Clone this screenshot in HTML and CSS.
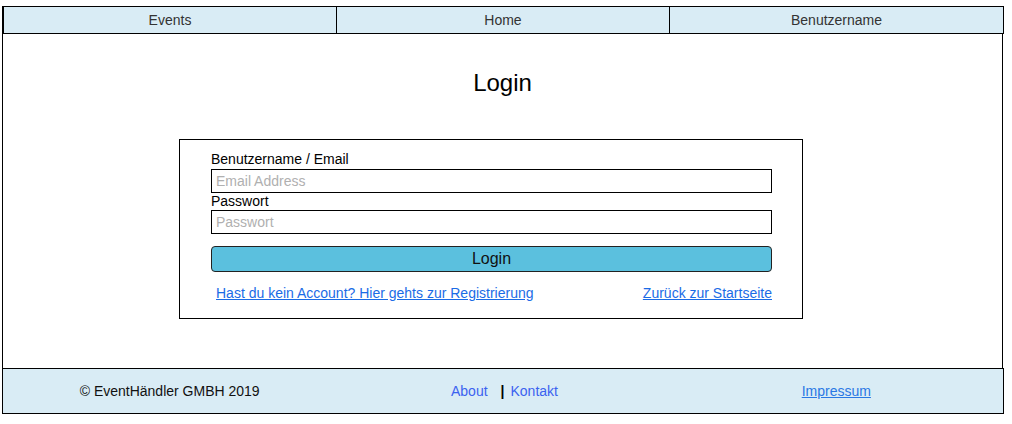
FILE: index.html
```html
<!DOCTYPE html>
<html lang="de">
<head>
<meta charset="utf-8">
<title>Login</title>
<link rel="stylesheet" href="styles.css">
</head>
<body>
<div class="page">
  <nav class="topnav">
    <a class="nav-item" href="#">Events</a>
    <a class="nav-item" href="#">Home</a>
    <a class="nav-item" href="#">Benutzername</a>
  </nav>
  <main class="main">
    <h1 class="title">Login</h1>
    <form class="login-box">
      <label class="field-label" for="email">Benutzername / Email</label>
      <input class="field-input" id="email" type="text" placeholder="Email Address">
      <label class="field-label tight" for="pw">Passwort</label>
      <input class="field-input" id="pw" type="password" placeholder="Passwort">
      <button class="login-btn" type="button">Login</button>
      <div class="link-row">
        <a class="form-link" href="#">Hast du kein Account? Hier gehts zur Registrierung</a>
        <a class="form-link" href="#">Zurück zur Startseite</a>
      </div>
    </form>
  </main>
  <footer class="footer">
    <div class="foot-col">© EventHändler GMBH 2019</div>
    <div class="foot-col shift">
      <a class="foot-link" href="#">About</a>
      <span class="sep">|</span>
      <a class="foot-link" href="#">Kontakt</a>
    </div>
    <div class="foot-col"><a class="foot-link underline" href="#">Impressum</a></div>
  </footer>
</div>
</body>
</html>
```
FILE: styles.css
```css
* { box-sizing: border-box; }
html, body { margin: 0; padding: 0; background: #fff; }
body {
  font-family: "Liberation Sans", Arial, sans-serif;
  font-size: 14px;
  color: #111;
}
.page {
  padding-top: 6px;
  padding-left: 2px;
  width: 1004px;
}
.topnav {
  display: grid;
  grid-template-columns: 1fr 1fr 1fr;
  width: 1002px;
  height: 28px;
  border: 1px solid #000;
  border-left-width: 2px;
  background: #d9ecf5;
}
.nav-item {
  display: flex;
  align-items: center;
  justify-content: center;
  color: #333;
  text-decoration: none;
  font-size: 14px;
  border-right: 1px solid #000;
}
.nav-item:last-child { border-right: none; }
.main {
  width: 1001px;
  height: 334px;
  border-left: 1px solid #000;
  border-right: 1px solid #000;
  padding-top: 35px;
}
.title {
  margin: 0 0 42px;
  font-size: 24px;
  font-weight: normal;
  line-height: 28px;
  text-align: center;
  color: #000;
}
.login-box {
  margin-left: 176px;
  width: 624px;
  height: 180px;
  border: 1px solid #000;
  padding: 11px 0 0 31px;
  display: flex;
  flex-direction: column;
  align-items: flex-start;
}
.field-label {
  display: block;
  line-height: 17px;
  margin-bottom: 1px;
  color: #000;
}
.field-label.tight { margin-bottom: 0; }
.field-input {
  width: 561px;
  height: 24px;
  border: 1px solid #000;
  border-radius: 0;
  padding: 0 4px;
  font-family: inherit;
  font-size: 14px;
  margin: 0;
  outline: none;
}
.field-input::placeholder { color: #b0b0b0; }
.login-btn {
  margin-top: 12px;
  width: 561px;
  height: 26px;
  background: #5bc0de;
  border: 1px solid #222;
  border-radius: 4px;
  font-family: inherit;
  font-size: 16px;
  color: #111;
  padding: 0;
}
.link-row {
  margin-top: 13px;
  width: 561px;
  padding-left: 5px;
  display: flex;
  justify-content: space-between;
  line-height: 16px;
}
.form-link {
  color: #1a6be6;
  text-decoration: underline;
}
.footer {
  display: grid;
  grid-template-columns: 1fr 1fr 1fr;
  width: 1002px;
  height: 46px;
  border: 1px solid #000;
  background: #d9ecf5;
  padding-bottom: 1px;
}
.foot-col {
  display: flex;
  align-items: center;
  justify-content: center;
  color: #111;
}
.foot-col.shift { padding-left: 3px; }
.foot-link {
  color: #3b62f0;
  text-decoration: none;
}
.foot-link.underline {
  color: #2a78e4;
  text-decoration: underline;
}
.sep {
  font-weight: bold;
  color: #000;
  margin: 0 6px 0 13px;
}
```
